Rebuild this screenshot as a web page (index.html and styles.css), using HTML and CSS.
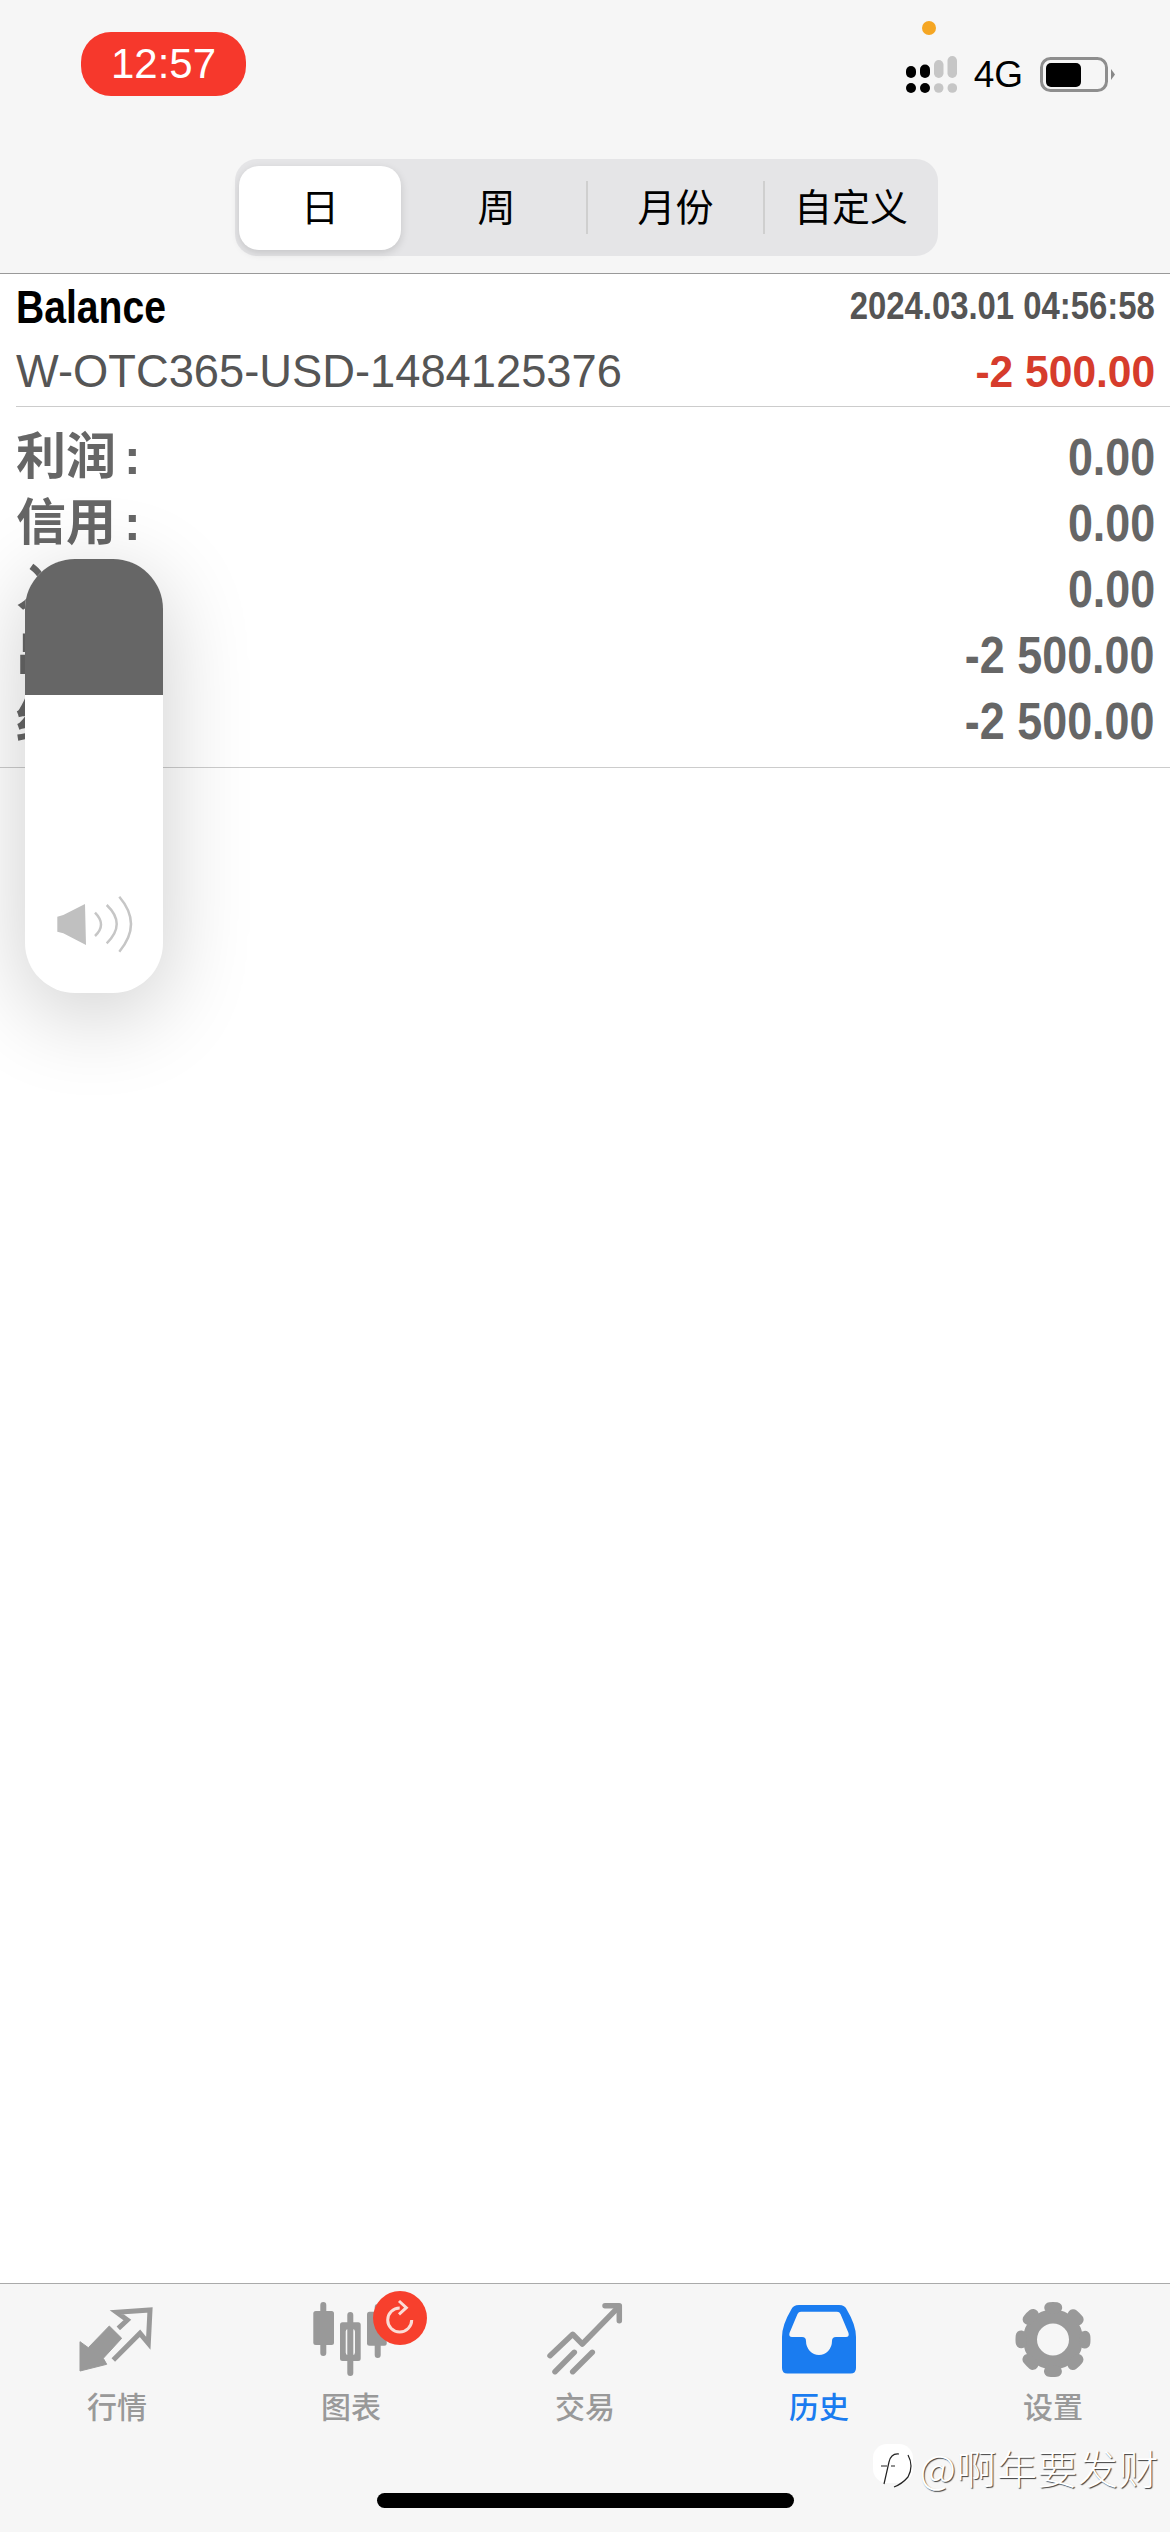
FILE: index.html
```html
<!DOCTYPE html>
<html lang="zh-CN">
<head>
  <meta charset="UTF-8">
  <title>历史</title>
  <meta name="viewport" content="width=device-width, initial-scale=1.0"/>
  <link rel="stylesheet" href="styles.css">
</head>
<body>
  <div class="page">

    <header class="top">
      <div class="status">
        <div class="clock">12:57</div>
        <div class="status-right">
          <svg class="signal" viewBox="0 0 51 37" width="51" height="37">
            <rect x="0" y="10" width="10" height="12" rx="5" fill="#000"/>
            <rect x="14" y="8.5" width="10" height="13.5" rx="5" fill="#000"/>
            <rect x="28" y="4" width="9.5" height="18" rx="4.7" fill="#c6c6c6"/>
            <rect x="41.5" y="0" width="9.5" height="22" rx="4.7" fill="#c6c6c6"/>
            <circle cx="5" cy="32" r="5" fill="#000"/>
            <circle cx="19" cy="32" r="5" fill="#000"/>
            <circle cx="32.7" cy="32" r="4.8" fill="#c6c6c6"/>
            <circle cx="46.3" cy="32" r="4.8" fill="#c6c6c6"/>
          </svg>
          <span class="net">4G</span>
          <svg class="battery" viewBox="0 0 75 35" width="75" height="35">
            <rect x="1.5" y="1.5" width="65" height="32" rx="9" fill="none" stroke="#8e8e8e" stroke-width="3"/>
            <rect x="6" y="6" width="35" height="24" rx="5" fill="#000"/>
            <path d="M71 12 L75 17.5 L71 23 Z" fill="#888"/>
          </svg>
        </div>
      </div>
      <div class="dot"></div>

      <nav class="seg">
        <div class="seg-item seg-day active">日</div>
        <div class="seg-item seg-week">周</div>
        <div class="seg-sep"></div>
        <div class="seg-item seg-month">月份</div>
        <div class="seg-sep"></div>
        <div class="seg-item seg-custom">自定义</div>
      </nav>
    </header>

    <main class="content">
      <section class="deal">
        <div class="deal-row">
          <span class="squeeze left title">Balance</span>
          <span class="squeeze right time">2024.03.01 04:56:58</span>
        </div>
        <div class="deal-row">
          <span class="account">W-OTC365-USD-1484125376</span>
          <span class="squeeze right amount">-2 500.00</span>
        </div>
      </section>

      <section class="summary">
        <div class="sum-row"><span class="sum-label">利润 :</span><span class="squeeze right sum-value">0.00</span></div>
        <div class="sum-row"><span class="sum-label">信用 :</span><span class="squeeze right sum-value">0.00</span></div>
        <div class="sum-row"><span class="sum-label">入金 :</span><span class="squeeze right sum-value">0.00</span></div>
        <div class="sum-row"><span class="sum-label">出金 :</span><span class="squeeze right sum-value">-2 500.00</span></div>
        <div class="sum-row"><span class="sum-label">结余 :</span><span class="squeeze right sum-value">-2 500.00</span></div>
      </section>
    </main>

    <footer class="tabbar">
      <div class="tabs">
        <div class="tab">
          <svg class="tab-icon" viewBox="0 0 80 78" width="80" height="78">
            <path d="M41.3 28.3 L50.3 20 L39.7 12.3 L73 10 L71.3 43.3 L63 33.3 L36.3 60" fill="none" stroke="#999" stroke-width="5"/>
            <path d="M32.3 26 L44.7 38.3 L26.3 58.3 L29.7 64.3 L3 71 L3 41.7 L11.3 47.7 Z" fill="#999" stroke="#999" stroke-width="1" stroke-linejoin="round"/>
          </svg>
          <span class="tab-label">行情</span>
        </div>
        <div class="tab">
          <svg class="tab-icon" viewBox="0 0 80 78" width="80" height="78">
            <g fill="#999">
              <rect x="9.3" y="2" width="6" height="54" rx="3"/>
              <rect x="2.3" y="11" width="20.7" height="34" rx="2.5"/>
              <rect x="36.3" y="12" width="6" height="64" rx="3"/>
              <path fill-rule="evenodd" d="M31.5 22.3 H47.2 Q49.7 22.3 49.7 24.8 V58.5 Q49.7 61 47.2 61 H31.5 Q29 61 29 58.5 V24.8 Q29 22.3 31.5 22.3 Z M37 29 Q34.7 29 34.7 31.5 V52.5 Q34.7 55 37 55 H41.7 Q44 55 44 52.5 V31.5 Q44 29 41.7 29 Z"/>
              <rect x="63.7" y="4" width="6" height="54" rx="3"/>
              <rect x="56" y="11.7" width="19.7" height="34" rx="2.5"/>
            </g>
          </svg>
          <div class="badge">
            <svg viewBox="0 0 54 54" width="54" height="54">
              <path d="M26.7 17 A12 12 0 1 0 38.7 29" fill="none" stroke="#fbdcd6" stroke-width="3"/>
              <path d="M26 10 L33.3 16.7 L26 23.3" fill="none" stroke="#fbdcd6" stroke-width="3"/>
            </svg>
          </div>
          <span class="tab-label">图表</span>
        </div>
        <div class="tab">
          <svg class="tab-icon" viewBox="0 0 80 78" width="80" height="78">
            <g fill="none" stroke="#999" stroke-width="5.5" stroke-linecap="round" stroke-linejoin="round">
              <path d="M5 55.7 L27.7 34.3 L37.3 44 L72.3 8.3"/>
              <path d="M60 5.7 H74.3 V20.7"/>
              <path d="M10 71.7 L29.3 52.3"/>
              <path d="M27.7 71.7 L47.3 52.3"/>
            </g>
          </svg>
          <span class="tab-label">交易</span>
        </div>
        <div class="tab active">
          <svg class="tab-icon" viewBox="0 0 80 78" width="80" height="78">
            <path fill="#1a7cf0" fill-rule="evenodd" d="M20 5 H60 Q66 5 68 10 Q77 25 77 37 V68 Q77 73.5 71.5 73.5 H8.5 Q3 73.5 3 68 V37 Q3 25 12 10 Q14 5 20 5 Z M22 11.7 Q19.5 11.7 18.5 14 L10.5 33 Q9.5 37 13 37 H23 Q27 37 27 41 A13 14 0 0 0 53 41 Q53 37 57 37 H67 Q70.5 37 69.5 33 L61.5 14 Q60.5 11.7 58 11.7 Z"/>
          </svg>
          <span class="tab-label">历史</span>
        </div>
        <div class="tab">
          <svg class="tab-icon" viewBox="0 0 80 78" width="80" height="78">
            <circle cx="40" cy="39.5" r="23" fill="none" stroke="#999" stroke-width="14"/>
            <circle cx="40" cy="39.5" r="32" fill="none" stroke="#999" stroke-width="11" stroke-linecap="round" stroke-dasharray="7 18.13" stroke-dashoffset="3.5"/>
          </svg>
          <span class="tab-label">设置</span>
        </div>
      </div>
      <div class="home-bar"></div>
    </footer>

    <!-- volume popup over the list -->
    <div class="volume">
      <div class="volume-fill"></div>
      <svg class="volume-icon" viewBox="0 0 80 60" width="80" height="60">
        <path d="M2.3 21.7 L8.3 20 L30 9 L31 50 L8.3 38.3 L2.3 36.7 Z" fill="#c0c0c0"/>
        <g fill="none" stroke="#c6c6c6" stroke-width="2.5">
          <path d="M40 17.7 Q52 29.7 40 41"/>
          <path d="M51.7 10 Q71.7 29 51.7 48.3"/>
          <path d="M64.3 1.7 Q87.7 29 64.3 56.7"/>
        </g>
      </svg>
    </div>

    <div class="mark">
      <svg viewBox="0 0 45 50" width="45" height="50">
        <rect x="2" y="2" width="40" height="39" rx="14" fill="#fff"/>
        <g fill="none" stroke="#222" stroke-width="1.2">
          <path d="M37 13 Q43 24 37 35 Q31 42 23 45"/>
          <path d="M28 12 Q20 11 18 20 L13 42"/>
          <path d="M10 24 H24" stroke-dasharray="6 4"/>
        </g>
      </svg>
      <span class="mark-text">@啊年要发财</span>
    </div>

  </div>
</body>
</html>
```

FILE: styles.css
```css
* {
  box-sizing: border-box;
}
body {
  margin: 0;
  background-color: #fff;
  font-family: "Liberation Sans", "Noto Sans CJK SC", sans-serif;
}
.page {
  position: relative;
  width: 1170px;
  height: 2532px;
  display: flex;
  flex-direction: column;
  overflow: hidden;
}

/* header */
.top {
  height: 274px;
  background-color: #f6f6f6;
  border-bottom: 1px solid #999;
}
.status {
  display: flex;
  justify-content: space-between;
  align-items: flex-start;
  padding: 32px 55px 0 81px;
  height: 96px;
}
.clock {
  width: 165px;
  height: 64px;
  border-radius: 30px;
  background-color: #f6382c;
  color: #fff;
  font-size: 42px;
  line-height: 64px;
  text-align: center;
}
.status-right {
  display: flex;
  align-items: center;
  gap: 17px;
  margin-top: 24px;
}
.net {
  font-size: 37px;
  line-height: 37px;
  color: #000;
}
.signal, .battery {
  display: block;
}
.dot {
  position: absolute;
  left: 922px;
  top: 21px;
  width: 14px;
  height: 14px;
  border-radius: 50%;
  background-color: #f5a623;
}
.seg {
  display: flex;
  align-items: center;
  width: 703px;
  height: 97px;
  margin: 63px 0 0 235px;
  padding: 0 0 0 4px;
  border-radius: 22px;
  background-color: #e5e5e7;
}
.seg-item {
  height: 84px;
  font-size: 38px;
  line-height: 84px;
  text-align: center;
  color: #000;
}
.seg-day { width: 162px; }
.seg-week { width: 185px; padding-left: 6px; }
.seg-month { width: 175px; }
.seg-custom { width: 172px; }
.seg-sep {
  width: 2px;
  height: 53px;
  background-color: #cfcfcf;
}
.seg-item.active {
  background-color: #fff;
  border-radius: 20px;
  box-shadow: 0 3px 8px rgba(0,0,0,0.14);
}

/* list */
.content {
  flex: 1;
}
.deal {
  margin-left: 16px;
  padding-right: 15px;
  height: 133px;
  border-bottom: 1px solid #ccc;
}
.deal-row {
  display: flex;
  justify-content: space-between;
  align-items: center;
  height: 65px;
}
.squeeze {
  display: inline-block;
  white-space: nowrap;
  font-weight: bold;
}
.squeeze.left {
  transform: scaleX(0.85);
  transform-origin: left center;
}
.squeeze.right {
  transform: scaleX(0.88);
  transform-origin: right center;
}
.title {
  font-size: 46px;
  color: #000;
}
.squeeze.time {
  font-size: 38px;
  color: #555;
  transform: scaleX(0.865);
}
.account {
  font-size: 45.3px;
  color: #555;
}
.squeeze.amount {
  font-size: 45px;
  color: #d63c2c;
  transform: scaleX(0.945);
}
.summary {
  padding: 17px 15px 14px 16px;
  height: 361px;
  border-bottom: 1px solid #ccc;
}
.sum-row {
  display: flex;
  justify-content: space-between;
  align-items: center;
  height: 66px;
}
.sum-label {
  font-size: 50px;
  line-height: 54px;
  font-weight: bold;
  word-spacing: -6px;
  color: #666;
}
.sum-value {
  font-size: 51px;
  color: #666;
}

/* bottom bar */
.tabbar {
  height: 249px;
  display: flex;
  flex-direction: column;
  background-color: #f6f6f6;
  border-top: 1px solid #aaa;
  padding: 16px 0 24px;
}
.tabs {
  display: flex;
}
.tab {
  position: relative;
  flex: 1;
  display: flex;
  flex-direction: column;
  align-items: center;
}
.tab-icon {
  display: block;
}
.tab-label {
  margin-top: 8px;
  font-size: 30px;
  line-height: 44px;
  font-weight: 500;
  color: #999;
}
.tab.active .tab-label {
  color: #1a7cf0;
}
.badge {
  position: absolute;
  left: 139px;
  top: -9px;
  width: 54px;
  height: 54px;
  border-radius: 50%;
  background-color: #f7402d;
}
.badge svg {
  display: block;
}
.home-bar {
  align-self: center;
  width: 417px;
  height: 15px;
  margin-top: auto;
  border-radius: 8px;
  background-color: #000;
}

/* overlays */
.volume {
  position: absolute;
  left: 25px;
  top: 559px;
  width: 138px;
  height: 434px;
  border-radius: 50px;
  background-color: #fff;
  box-shadow: 0 20px 90px rgba(0,0,0,0.2);
  overflow: hidden;
}
.volume-fill {
  height: 136px;
  background-color: #666;
}
.volume-icon {
  position: absolute;
  left: 30px;
  top: 336px;
}
.mark {
  position: absolute;
  right: 11px;
  bottom: 40px;
  display: flex;
  align-items: center;
  gap: 4px;
}
.mark-text {
  font-family: "Noto Sans CJK SC", sans-serif;
  font-size: 40px;
  font-weight: 300;
  line-height: 47px;
  letter-spacing: 0.5px;
  color: #fff;
  text-shadow: 1px 1px 1px rgba(0,0,0,0.75);
}
```
